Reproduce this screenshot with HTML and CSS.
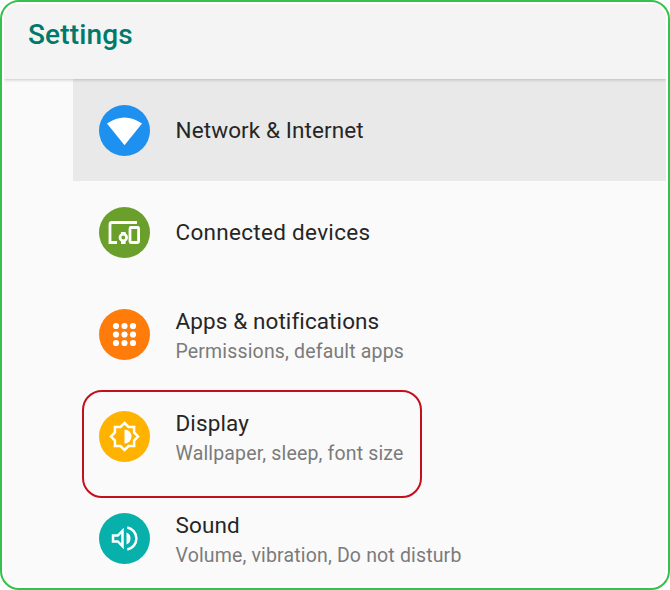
FILE: index.html
```html
<!DOCTYPE html>
<html lang="en">
<head>
<meta charset="utf-8">
<title>Settings</title>
<link rel="stylesheet" href="styles.css">
</head>
<body>
<main class="frame">
  <div class="screen">
    <header class="header"><h1 class="title">Settings</h1></header>
    <ul class="list">
      <li class="row selected">
        <svg class="icon blue" viewBox="0 0 51 51"><path fill="#fff" d="M8 18.500Q25.500 6.500 43 18.500L25.500 40.200Z"/></svg>
        <div class="text"><span class="name">Network &amp; Internet</span></div>
      </li>
      <li class="row">
        <svg class="icon green" viewBox="0 0 51 51"><g fill="none" stroke="#fff" stroke-width="2.8"><path d="M38 15.500H13Q11 15.500 11 17.500V35.500H18"/><rect x="31" y="20.500" width="8.600" height="15" rx="1"/><circle cx="24.300" cy="30.500" r="3.300"/></g><path fill="#fff" d="M22 25h4.600v3H22zM22 33.500h4.600v3.500H22z"/></svg>
        <div class="text"><span class="name wide">Connected devices</span></div>
      </li>
      <li class="row">
        <svg class="icon orange" viewBox="0 0 51 51"><g fill="#fff"><circle cx="17" cy="17" r="3.100"/><circle cx="25.500" cy="17" r="3.100"/><circle cx="34" cy="17" r="3.100"/><circle cx="17" cy="25.500" r="3.100"/><circle cx="25.500" cy="25.500" r="3.100"/><circle cx="34" cy="25.500" r="3.100"/><circle cx="17" cy="34" r="3.100"/><circle cx="25.500" cy="34" r="3.100"/><circle cx="34" cy="34" r="3.100"/></g></svg>
        <div class="text double"><span class="name">Apps &amp; notifications</span><span class="detail">Permissions, default apps</span></div>
      </li>
      <li class="row outlined">
        <svg class="icon amber" viewBox="0 0 51 51"><path fill="none" stroke="#fff" stroke-width="2.500" d="M25.500 12 29.600 15.900H35.100V21.400L39 25.500 35.100 29.600V35.100H29.600L25.500 39 21.400 35.100H15.900V29.600L12 25.500 15.900 21.400V15.900H21.400Z"/><path fill="#fff" d="M25.500 18.500a7 7 0 0 1 0 14z"/></svg>
        <div class="text double"><span class="name">Display</span><span class="detail">Wallpaper, sleep, font size</span></div>
      </li>
      <li class="row">
        <svg class="icon teal" viewBox="0 0 51 51"><g fill="none" stroke="#fff" stroke-width="2.500"><path d="M14 22.500H18.800L23.500 17.700V33.300L18.800 28.500H14Z"/><path d="M28.300 14.500A11.200 11.200 0 0 1 28.300 36.500"/></g><path fill="#fff" d="M27.500 19.500a6.500 6.500 0 0 1 0 12z"/></svg>
        <div class="text double"><span class="name">Sound</span><span class="detail">Volume, vibration, Do not disturb</span></div>
      </li>
    </ul>
  </div>
</main>
</body>
</html>
```
FILE: styles.css
```css
*, *::after { box-sizing: border-box; }
body { margin: 0; background: #fff; font-family: Roboto, "Liberation Sans", sans-serif; }
.frame { height: 590px; padding: 2px; border: 2px solid #35c24a; border-radius: 19px; background: #fff; }
.screen { height: 100%; overflow: hidden; border-radius: 15px; background: #fafafa; }
.header { position: relative; z-index: 1; height: 75px; padding: 15px 0 0 24px; background: #f4f4f4; box-shadow: 0 1px 3px rgba(0, 0, 0, .2); }
.title { margin: 0; font-size: 28px; line-height: 32px; font-weight: 500; letter-spacing: .15px; color: #00796b; }
.list { margin: 0; padding: 0 0 0 69px; list-style: none; }
.row { position: relative; display: flex; align-items: center; height: 102px; padding-left: 26px; }
.selected { background: #e9e9e9; }
.outlined::after { content: ""; position: absolute; left: 9px; top: 5px; width: 340px; height: 108px; border: 2px solid #c4101c; border-radius: 20px; }
.icon { flex: none; width: 51px; height: 51px; margin-right: 25.500px; border-radius: 50%; }
.blue { background: #1e90f0; }
.green { background: #6a9f2c; }
.orange { background: #ff7b0a; }
.amber { background: #ffb300; }
.teal { background: #08b0ac; }
.text { display: flex; flex-direction: column; gap: 2px; }
.double { padding-top: 3px; }
.name { font-size: 22.500px; line-height: 30px; letter-spacing: .1px; color: #262626; }
.wide { letter-spacing: .3px; }
.detail { font-size: 19.500px; line-height: 28px; letter-spacing: .16px; color: #7b7b7b; }
```
